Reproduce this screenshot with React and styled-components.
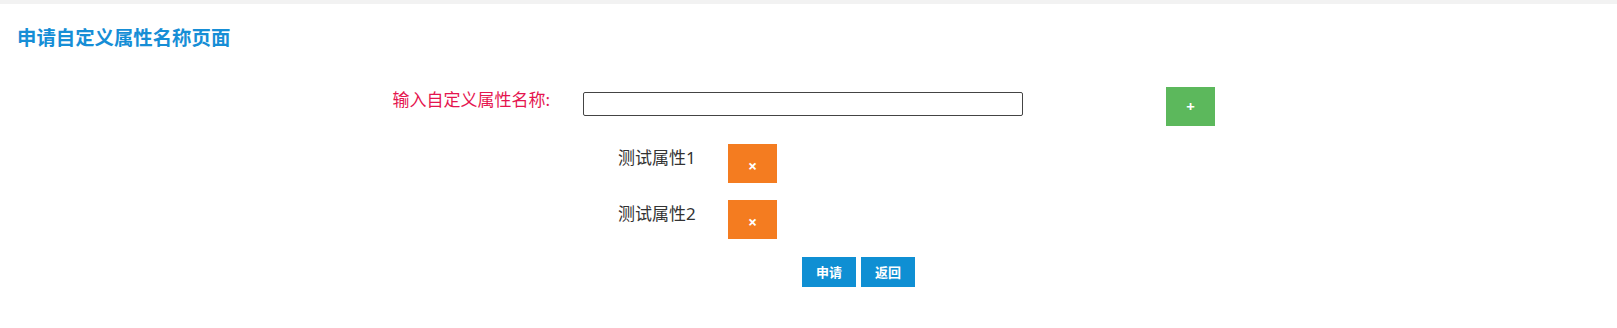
import React from 'react';
import styled, { createGlobalStyle } from 'styled-components';

const GlobalStyle = createGlobalStyle`
    body {
        margin: 0;
        background: #ffffff;
        font-family: "Noto Sans", "Noto Sans CJK SC", sans-serif;
    }
`;

// faixa cinza no topo
const TopBar = styled.div`
    height: 4px;
    background: #f2f2f2;
`;

const Titulo = styled.h3`
    margin: 22px 0 0;
    padding-left: 17px;
    font-size: 19.4px;
    line-height: 24px;
    font-weight: 700;
    color: #168ed6;
`;

const Formulario = styled.form`
    display: flex;
    flex-direction: column;
    margin-top: 37px;
`;

const Linha = styled.div`
    display: flex;
    align-items: flex-start;
    margin-top: ${props => props.espaco || 0}px;
`;

const Rotulo = styled.label`
    width: 550px;
    margin-top: 2px;
    text-align: right;
    font-size: 17px;
    line-height: 22px;
    color: #e5154f;
`;

const Campo = styled.input`
    box-sizing: border-box;
    width: 440px;
    height: 24px;
    margin: 5px 0 0 33px;
    border: 1px solid #444;
    border-radius: 2px;
    padding: 0 4px;
    font-size: 13px;
    outline: none;
`;

const Botao = styled.button`
    box-sizing: border-box;
    width: ${props => props.largura || 49}px;
    height: ${props => props.altura || 39}px;
    margin-left: ${props => props.recuo || 0}px;
    padding: ${props => (props.baixo ? '5px 0 0' : '0')};
    border: none;
    background: ${props => props.cor};
    color: #ffffff;
    font-family: "Noto Sans", "Noto Sans CJK SC", sans-serif;
    font-size: ${props => props.tamanho || 12}px;
    font-weight: 700;
    line-height: 1;
    cursor: pointer;
`;

const NomeAtributo = styled.span`
    width: 110px;
    margin: 3px 0 0 618px;
    font-size: 17px;
    line-height: 22px;
    color: #333333;
`;

const Acoes = styled.div`
    display: flex;
    gap: 5px;
    margin: 18px 0 0 802px;
`;

const atributos = ['测试属性1', '测试属性2'];

export default function App() {
    return (
        <>
            <GlobalStyle />
            <TopBar />
            <Titulo>申请自定义属性名称页面</Titulo>
            <Formulario onSubmit={e => e.preventDefault()}>
                <Linha>
                    <Rotulo>输入自定义属性名称:</Rotulo>
                    <Campo type="text" />
                    <Botao cor="#5cb85c" recuo={143} tamanho={15}>+</Botao>
                </Linha>

                {atributos.map((nome, i) => (
                    <Linha key={nome} espaco={i === 0 ? 18 : 17}>
                        <NomeAtributo>{nome}</NomeAtributo>
                        <Botao cor="#f47c20" baixo tamanho={16}>×</Botao>
                    </Linha>
                ))}

                <Acoes>
                    <Botao cor="#0f8fd3" largura={54} altura={30} tamanho={13}>申请</Botao>
                    <Botao cor="#0f8fd3" largura={54} altura={30} tamanho={13}>返回</Botao>
                </Acoes>
            </Formulario>
        </>
    );
}
